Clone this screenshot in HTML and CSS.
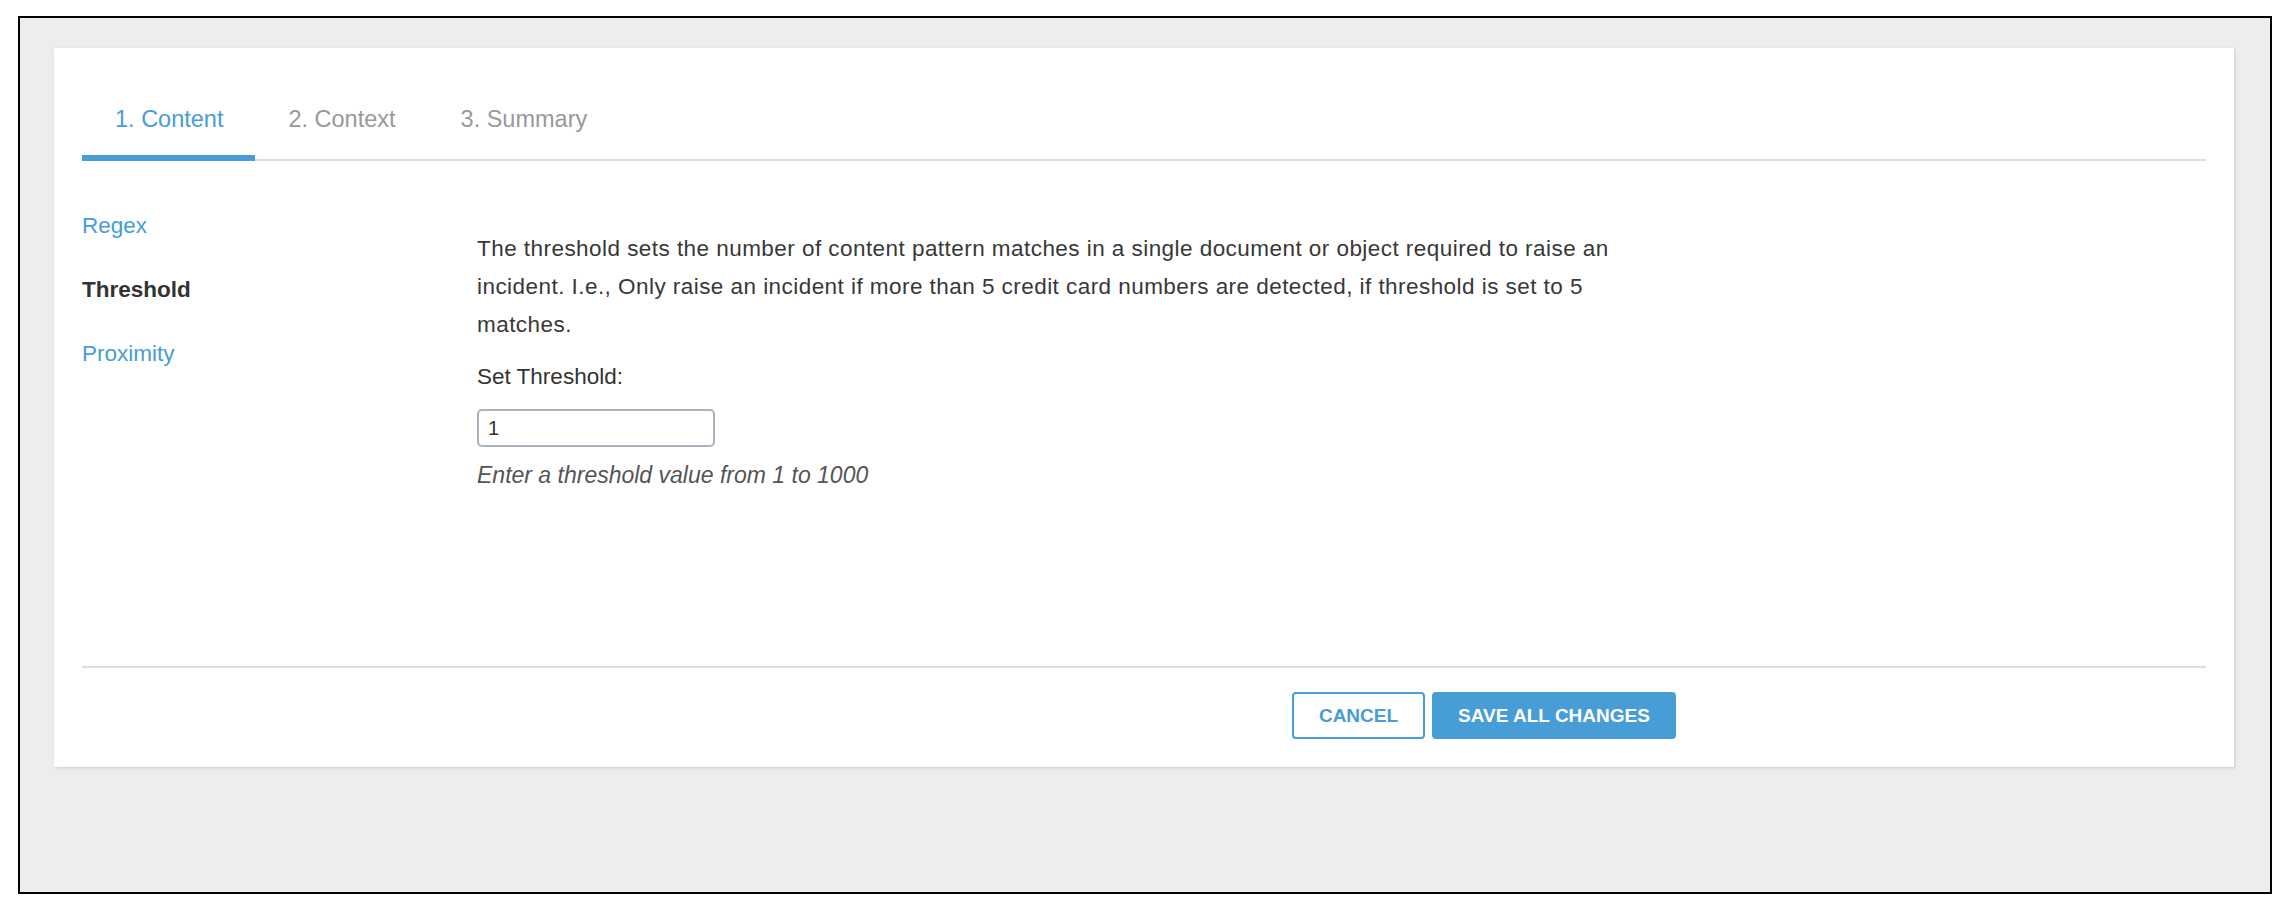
FILE: index.html
```html
<!DOCTYPE html>
<html lang="en">
<head>
  <meta charset="UTF-8" />
  <title>Content Pattern - Threshold</title>
  <link rel="stylesheet" href="styles.css">
</head>
<body>
  <div class="frame">
    <div class="card">
      <!-- wizard steps -->
      <div class="tabs">
        <div class="tab active">1. Content</div>
        <div class="tab">2. Context</div>
        <div class="tab">3. Summary</div>
      </div>

      <div class="panel">
        <ul class="side-nav">
          <li><a href="#">Regex</a></li>
          <li class="current">Threshold</li>
          <li><a href="#">Proximity</a></li>
        </ul>

        <div class="content">
          <p class="desc">The threshold sets the number of content pattern matches in a single document or object required to raise an incident. I.e., Only raise an incident if more than 5 credit card numbers are detected, if threshold is set to 5 matches.</p>
          <label for="threshold" class="field-label">Set Threshold:</label>
          <input type="text" id="threshold" class="input-cell" value="1" />
          <div class="hint">Enter a threshold value from 1 to 1000</div>
        </div>
      </div>

      <div class="footer">
        <button class="btn btn-outline">Cancel</button>
        <button class="btn btn-primary">Save All Changes</button>
      </div>
    </div>
  </div>
</body>
</html>
```

FILE: styles.css
```css
body {
  font-family: 'Liberation Sans', Arial, sans-serif;
  background-color: #fff;
  color: #333;
  margin: 0;
  padding: 0;
}
.frame {
  width: 2254px;
  height: 878px;
  box-sizing: border-box;
  margin: 16px 0 0 18px;
  border: 2px solid #000;
  background-color: #ededed;
  box-shadow: 0 8px 0 -4px #ededed;
  padding: 30px 36px 0 34px;
}
.card {
  background-color: white;
  height: 719px;
  box-sizing: border-box;
  padding: 57px 28px 0;
  box-shadow: 1px 1px 3px rgba(0, 0, 0, 0.14);
}
/* onglets de l'assistant */
.tabs {
  display: flex;
  border-bottom: 2px solid #dedede;
}
.tab {
  font-size: 23.5px;
  line-height: 28px;
  padding: 0 32px 22px 33px;
  border-bottom: 6px solid transparent;
  margin-bottom: -2px;
  color: #999;
}
.tab.active {
  color: #479dd5;
  border-bottom-color: #479dd5;
}
.panel {
  display: flex;
  height: 505px;
  box-sizing: border-box;
  padding-top: 53px;
}
.side-nav {
  list-style: none;
  margin: 0;
  padding: 0;
  width: 395px;
  font-size: 22.5px;
  line-height: 24px;
}
.side-nav li {
  margin-bottom: 40px;
}
.side-nav a {
  color: #479dd5;
  text-decoration: none;
}
.side-nav .current {
  font-weight: bold;
  color: #333;
}
.content {
  padding-top: 16px;
  font-size: 22.5px;
}
.desc {
  max-width: 1160px;
  margin: 0 0 21px;
  line-height: 38px;
  letter-spacing: 0.45px;
  color: #383838;
}
.field-label {
  display: block;
  line-height: 24px;
  margin-bottom: 20px;
}
.input-cell {
  display: block;
  width: 238px;
  height: 38px;
  box-sizing: border-box;
  border: 2px solid #a9b3be;
  border-radius: 5px;
  padding: 0 9px;
  font-family: inherit;
  font-size: 20px;
  color: #333;
}
.hint {
  margin-top: 16px;
  line-height: 24px;
  font-size: 23px;
  font-style: italic;
  color: #555;
}
.footer {
  display: flex;
  justify-content: flex-end;
  gap: 7px;
  border-top: 2px solid #dedede;
  padding: 24px 530px 0 0;
}
.btn {
  height: 47px;
  padding: 0;
  border: 2px solid #479dd5;
  border-radius: 4px;
  font-family: inherit;
  font-size: 19px;
  font-weight: bold;
  text-transform: uppercase;
  cursor: pointer;
}
.btn-outline {
  width: 133px;
  background-color: white;
  color: #479dd5;
}
.btn-primary {
  width: 244px;
  background-color: #479dd5;
  color: white;
}
```
